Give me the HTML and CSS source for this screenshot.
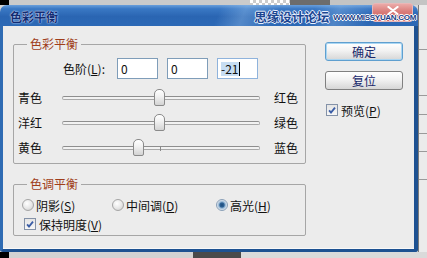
FILE: index.html
```html
<!DOCTYPE html>
<html lang="zh-CN">
<head>
<meta charset="utf-8">
<title>色彩平衡</title>
<link rel="stylesheet" href="styles.css">
</head>
<body>
<div class="screen">
  <div class="topstrip">
    <span class="ts-black"></span><span class="ts-gray"></span><span class="ts-checker"></span><span class="ts-dark"></span><span class="ts-gray2"></span>
  </div>
  <div class="middle">
    <div class="dialog">
      <div class="titlebar">
        <span class="title">色彩平衡</span>
        <span class="close"><svg width="12" height="9" viewBox="0 0 12 9"><path d="M1.5 1 L10.5 8 M10.5 1 L1.5 8" stroke="#fff" stroke-width="2.2" stroke-linecap="round"/></svg></span>
        <span class="wm-cn">思缘设计论坛</span>
        <span class="wm-en">WWW.MISSYUAN.COM</span>
      </div>
      <div class="frame">
        <div class="leftcol">
          <fieldset class="group g1">
            <legend>色彩平衡</legend>
            <div class="g1-body">
              <div class="levels">
                <span class="lv-label">色阶(<u>L</u>):</span>
                <span class="input">0</span>
                <span class="input">0</span>
                <span class="input focus"><span class="sel">-21</span><span class="caret"></span></span>
              </div>
              <div class="srow">
                <span class="sl">青色</span>
                <div class="track"><span class="tick"></span><span class="thumb" style="left:50%"></span></div>
                <span class="sr">红色</span>
              </div>
              <div class="srow">
                <span class="sl">洋红</span>
                <div class="track"><span class="tick"></span><span class="thumb" style="left:50%"></span></div>
                <span class="sr">绿色</span>
              </div>
              <div class="srow">
                <span class="sl">黄色</span>
                <div class="track"><span class="tick"></span><span class="thumb" style="left:39.5%"></span></div>
                <span class="sr">蓝色</span>
              </div>
            </div>
          </fieldset>
          <fieldset class="group g2">
            <legend>色调平衡</legend>
            <div class="g2-body">
              <div class="radios">
                <span class="opt"><span class="radio"></span>阴影(<u>S</u>)</span>
                <span class="opt"><span class="radio"></span>中间调(<u>D</u>)</span>
                <span class="opt"><span class="radio on"></span>高光(<u>H</u>)</span>
              </div>
              <span class="opt"><span class="check"><svg width="11" height="11" viewBox="0 0 11 11"><path d="M2.3 5.4 L4.4 7.9 L8.8 2.4" fill="none" stroke="#3a5da6" stroke-width="2"/></svg></span>保持明度(<u>V</u>)</span>
            </div>
          </fieldset>
        </div>
        <div class="rightcol">
          <div class="btn default">确定</div>
          <div class="btn">复位</div>
          <span class="opt preview"><span class="check"><svg width="11" height="11" viewBox="0 0 11 11"><path d="M2.3 5.4 L4.4 7.9 L8.8 2.4" fill="none" stroke="#3a5da6" stroke-width="2"/></svg></span>预览(<u>P</u>)</span>
        </div>
      </div>
    </div>
    <div class="side">
      <div class="sd s1"></div><div class="sd s2"></div><div class="sd s3"></div><div class="sd s4"></div><div class="sd s5"></div><div class="sd s6"></div>
    </div>
  </div>
  <div class="bottomstrip">
    <span class="bs-black"></span><span class="bs-light"></span><span class="bs-dark"></span><span class="bs-light2"></span>
  </div>
</div>
</body>
</html>
```

FILE: styles.css
```css
* { box-sizing: border-box; }
html, body { margin: 0; padding: 0; }
body {
  width: 427px;
  height: 258px;
  overflow: hidden;
  background: #d6d6d6;
  font-family: "Noto Sans CJK SC", "Noto Sans", sans-serif;
  font-size: 12px;
  color: #111;
}
.screen { display: flex; flex-direction: column; width: 427px; height: 258px; }

/* top strip */
.topstrip { display: flex; height: 5px; flex: none; }
.ts-black { width: 9px; background: #000; }
.ts-gray { width: 241px; background: #cbcbcb; }
.ts-checker {
  width: 40px;
  background-color: #fff;
  background-image: linear-gradient(45deg, #ccc 25%, transparent 25%, transparent 75%, #ccc 75%),
                    linear-gradient(45deg, #ccc 25%, transparent 25%, transparent 75%, #ccc 75%);
  background-size: 6px 6px;
  background-position: 0 0, 3px 3px;
}
.ts-dark { width: 40px; background: #6c6c6c; }
.ts-gray2 { flex: 1; background: #c4c4c4; }

/* middle */
.middle { display: flex; height: 247px; flex: none; }
.dialog { width: 418px; display: flex; flex-direction: column; }

.titlebar {
  position: relative;
  height: 21px;
  flex: none;
  display: flex;
  align-items: center;
  padding: 2px 2px 0 10px;
  border-radius: 7px 7px 0 0;
  background:
    linear-gradient(112deg, rgba(255,255,255,0) 0%, rgba(255,255,255,0) 52%, rgba(160,200,240,.35) 58%, rgba(255,255,255,0) 66%, rgba(255,255,255,0) 74%, rgba(160,200,240,.3) 80%, rgba(255,255,255,0) 88%),
    linear-gradient(180deg, #6a9fdb 0%, #3a78c4 18%, #2a65b2 55%, #2c69b6 100%);
}
.title {
  font-weight: bold;
  font-size: 12px;
  color: #122c72;
  text-shadow: 0 0 1px #d8e6ff, 0 0 2px #c8dcff;
}
.close {
  position: absolute;
  right: 5px;
  top: -2px;
  width: 41px;
  height: 19px;
  border-radius: 3px;
  border: 1px solid #e9b7b7;
  background: linear-gradient(180deg, #ebaaa8 0%, #d97c79 45%, #cf6460 100%);
  display: flex;
  justify-content: center;
  padding-top: 2px;
}
.wm-cn {
  position: relative;
  margin-left: auto;
  font-weight: bold;
  font-size: 12.5px;
  color: #1c4690;
  text-shadow: 1px 0 0 #e8f0ff, -1px 0 0 #e8f0ff, 0 1px 0 #e8f0ff, 0 -1px 0 #e8f0ff;
}
.wm-en {
  position: relative;
  margin-left: 4px;
  font-family: "Liberation Sans", sans-serif;
  font-weight: bold;
  font-size: 8px;
  letter-spacing: -0.3px;
  color: #1a3f88;
  text-shadow: 1px 0 0 #fff, -1px 0 0 #fff, 0 1px 0 #fff, 0 -1px 0 #fff;
  padding-top: 2px;
}

.frame {
  flex: 1;
  display: flex;
  background: #ececec;
  border-left: 3px solid #2f6bb3;
  border-right: 4px solid #1d5191;
  border-bottom: 3px solid #1d5191;
  border-radius: 0 0 3px 3px;
  padding: 10px 0 0 10px;
  box-shadow: inset 0 -1px 0 #f8f8f8;
}

.leftcol { width: 293px; display: flex; flex-direction: column; }

.group {
  margin: 0;
  padding: 0;
  border: 1px solid #a6a6a6;
  border-radius: 2px;
  min-width: 0;
}
.group legend {
  margin-left: 13px;
  padding: 0 3px;
  line-height: 16px;
  font-size: 12px;
  color: #a03e1a;
}
.g1 { height: 128px; }
.g1-body { padding: 6px 0 0 4px; }

.levels { display: flex; align-items: center; height: 21px; padding-left: 45px; gap: 9px; }
.lv-label { width: 45px; }
.input {
  width: 41px;
  height: 21px;
  border: 1px solid #7f9db9;
  background: #fff;
  padding-left: 3px;
  line-height: 19px;
  display: flex;
  align-items: center;
}
.input.focus { border-color: #8fb3dc; }
.sel { background: #c7ddf2; line-height: 14px; padding: 0 1px 0 0; }
.caret { width: 1px; height: 14px; background: #000; }

.srow {
  display: grid;
  grid-template-columns: 44px 198px 14px auto;
  align-items: center;
  height: 25px;
}
.levels + .srow { margin-top: 6px; }
.track {
  grid-column: 2;
  position: relative;
  height: 4px;
  border: 1px solid #a9a9a9;
  border-top-color: #8e8e8e;
  border-radius: 2px;
  background: #f2f2f2;
}
.tick {
  position: absolute;
  left: 50%;
  margin-left: -1px;
  top: -1px;
  width: 1px;
  height: 5px;
  background: #8a8a8a;
}
.thumb {
  position: absolute;
  top: 50%;
  margin-top: -9px;
  margin-left: -7px;
  width: 11px;
  height: 17px;
  border: 1px solid #8a8a8a;
  border-radius: 5px 5px 2px 2px;
  background: linear-gradient(180deg, #ffffff 0%, #f2f2f2 40%, #d3d3d3 100%);
}
.sr { grid-column: 4; }

.g2 { margin-top: 12px; height: 60px; }
.g2-body { padding: 4px 0 0 8px; display: flex; flex-direction: column; gap: 1px; }
.radios { display: grid; grid-template-columns: 90px 104px auto; height: 18px; align-items: center; }
.opt { display: flex; align-items: center; height: 18px; white-space: nowrap; }
.radio {
  width: 12px;
  height: 12px;
  border-radius: 50%;
  border: 1px solid #a5a5a5;
  background: radial-gradient(circle at 40% 35%, #ffffff 0%, #e6e6e6 55%, #c9c9c9 100%);
  margin-right: 2px;
  flex: none;
}
.radio.on {
  background: radial-gradient(circle, #1c4a7a 0%, #2f6396 30%, #8fb2d2 45%, #e0e8f0 70%, #c6cfd8 100%);
  border-color: #8aa0b8;
}
.check {
  width: 12px;
  height: 12px;
  border: 1px solid #8492a8;
  background: linear-gradient(180deg, #e4e4e4 0%, #f7f7f7 100%);
  margin: 0 3px 0 1px;
  display: flex;
  align-items: center;
  justify-content: center;
  flex: none;
}
.g2-body > .opt { margin-left: 1px; }

.rightcol { width: 78px; margin-left: 19px; padding-top: 6px; display: flex; flex-direction: column; }
.btn {
  height: 19px;
  border: 1px solid #808080;
  border-radius: 3px;
  background: linear-gradient(180deg, #ffffff 0%, #f2f2f2 45%, #d6d6d6 100%);
  color: #17286b;
  display: flex;
  align-items: center;
  justify-content: center;
  font-size: 12px;
}
.btn.default {
  border-color: #5f9fcf;
  box-shadow: inset 0 0 0 1px #a9d6f3;
}
.btn + .btn { margin-top: 10px; }
.preview { margin-top: 13px; height: 14px; }

/* side panel */
.side { flex: 1; background: #ebebeb; border-left: 1px solid #7a7a7a; display: flex; flex-direction: column; }
.sd { border-bottom: 1px solid #9a9a9a; flex: none; }
.s1 { height: 45px; }
.s2 { height: 46px; }
.s3 { height: 19px; }
.s4 { height: 19px; }
.s5 { height: 18px; }
.s6 { height: 28px; }

/* bottom strip */
.bottomstrip { display: flex; flex: 1; }
.bs-black { width: 9px; background: #000; }
.bs-light { width: 184px; background: #d2d2d2; }
.bs-dark { width: 48px; background: #4a4a4a; }
.bs-light2 { flex: 1; background: #dadada; }
```
